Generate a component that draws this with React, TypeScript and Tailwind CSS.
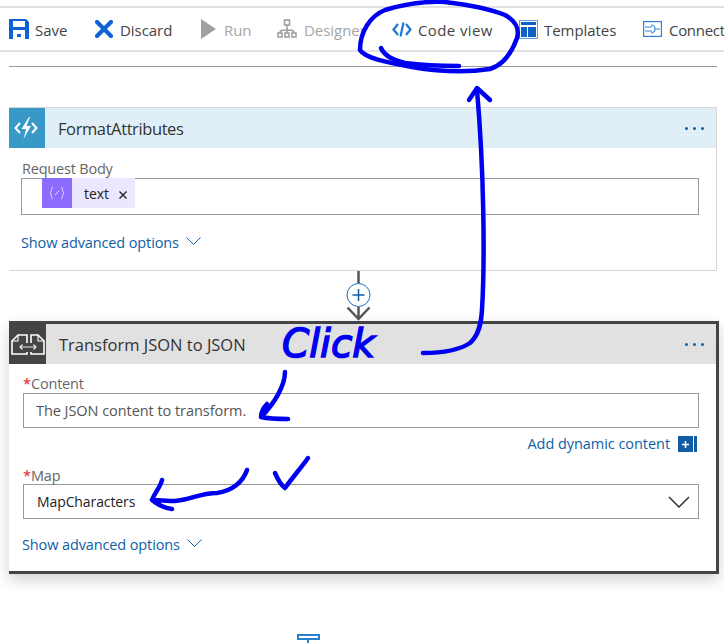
import type { ReactNode } from 'react';

const font = "font-['Open_Sans','Liberation_Sans',sans-serif]";

function ToolItem({ width, icon, label, muted, iconBox, tracking = 'tracking-[-0.05px]' }: { width: string; icon: ReactNode; label: string; muted?: boolean; iconBox: string; tracking?: string }) {
  return (
    <div className={`flex items-center shrink-0 ${width}`}>
      <div className={`flex items-center shrink-0 ${iconBox}`}>{icon}</div>
      <span className={`text-[15px] mt-[2px] whitespace-nowrap ${tracking} ${muted ? 'text-[#a6a6a6]' : 'text-[#444]'}`}>{label}</span>
    </div>
  );
}

function Toolbar() {
  return (
    <div className="mt-[6px] h-[46px] border-y-2 border-[#e2e2e2] flex items-center pl-[9px] overflow-hidden shrink-0">
      <ToolItem
        width="w-[86px]"
        iconBox="w-[26px]"
        label="Save"
        icon={
          <svg width="20" height="20" viewBox="0 0 20 20" fill="#0f62d6">
            <path fillRule="evenodd" d="M0 0h17l3 3v17H0zM4 2v6h12V2zM4 11v9h12v-9z" />
            <rect x="8" y="15" width="4" height="3" />
          </svg>
        }
      />
      <ToolItem
        width="w-[106px]"
        iconBox="w-[25px]"
        label="Discard"
        icon={
          <svg width="18" height="18" viewBox="0 0 18 18">
            <path d="M2 2l14 14M16 2L2 16" stroke="#0f62d6" strokeWidth="4.2" strokeLinecap="round" />
          </svg>
        }
      />
      <ToolItem
        width="w-[76px]"
        iconBox="w-[23px]"
        label="Run"
        muted
        icon={
          <svg width="15" height="20" viewBox="0 0 15 20" fill="#a0a0a0">
            <path d="M0 0l15 10L0 20z" />
          </svg>
        }
      />
      <ToolItem
        width="w-[115px]"
        iconBox="w-[27px]"
        label="Designer"
        muted
        icon={
          <svg width="20" height="20" viewBox="0 0 20 20" fill="none" stroke="#a0a0a0" strokeWidth="1.6">
            <rect x="7.5" y="1" width="5" height="5" />
            <rect x="1" y="14" width="4" height="4" />
            <rect x="8" y="14" width="4" height="4" />
            <rect x="15" y="14" width="4" height="4" />
            <path d="M10 6v8M3 14c0-3 2-3 7-3s7 0 7 3" />
          </svg>
        }
      />
      <ToolItem
        width="w-[127px]"
        iconBox="w-[26px]"
        label="Code view"
        tracking="tracking-[0.4px]"
        icon={
          <svg width="20" height="15" viewBox="0 0 20 15" fill="none" stroke="#1b76d8" strokeWidth="2.2">
            <path d="M6 2L1.500 7.500 6 13M14 2l4.500 5.500L14 13M11.500 0.500L8.500 14.500" />
          </svg>
        }
      />
      <ToolItem
        width="w-[124px]"
        iconBox="w-[25px]"
        label="Templates"
        icon={
          <svg width="19" height="19" viewBox="0 0 19 19">
            <rect x="0.500" y="0.500" width="18" height="18" fill="none" stroke="#5b9fe6" />
            <path d="M2 2h15v3H2zM2 7h6v10H2zM9 7h8v10H9z" fill="#0f62c4" />
          </svg>
        }
      />
      <ToolItem
        width="w-[81px]"
        iconBox="w-[26px]"
        label="Connect"
        tracking="tracking-[-0.3px]"
        icon={
          <svg width="19" height="16" viewBox="0 0 19 16" fill="none" stroke="#2f80dc" strokeWidth="1.2">
            <rect x="0.600" y="0.600" width="17.800" height="14.800" />
            <path d="M2 6h7M2 10h7M8 4a4 4 0 0 1 0 8M12 8h5" />
          </svg>
        }
      />
    </div>
  );
}

function AdvancedLink() {
  return (
    <div className="flex items-center gap-[7px] text-[14.500px] leading-[20px] tracking-[-0.12px] text-[#0f5ea8]">
      <span>Show advanced options</span>
      <svg width="15" height="8" viewBox="0 0 15 8" fill="none" stroke="#0f5ea8" strokeWidth="1" className="mb-[5px]">
        <path d="M0.500 0.500L7.500 7.500L14.500 0.500" />
      </svg>
    </div>
  );
}

function MoreDots() {
  return (
    <div className="flex gap-[5px] ml-auto mt-[1px]">
      <span className="w-[3px] h-[3px] rounded-full bg-[#0f5ea8]" />
      <span className="w-[3px] h-[3px] rounded-full bg-[#0f5ea8]" />
      <span className="w-[3px] h-[3px] rounded-full bg-[#0f5ea8]" />
    </div>
  );
}

function FormatCard() {
  return (
    <div className="mt-[40px] ml-[9px] w-[708px] h-[164px] shrink-0 border-t border-r border-b border-[#d6d6d6]">
      <div className="h-[40px] flex items-center bg-[#e0eff7] pr-[12px]">
        <div className="w-[36px] h-[40px] bg-[#3999c6] flex items-center justify-center">
          <svg width="24" height="24" viewBox="0 0 24 24" fill="none" className="-ml-[3px]">
            <path d="M6 7L1.500 12 6 17M18 7l4.500 5-4.500 5" stroke="#fff" strokeWidth="2" />
            <path d="M15 1L7.500 13H12l-2.500 10L17 10h-4.500L16 1z" fill="#fff" />
          </svg>
        </div>
        <span className="ml-[13px] mt-[2px] text-[16.500px] tracking-[-0.4px] text-[#333]">FormatAttributes</span>
        <MoreDots />
      </div>
      <div className="pl-[12px] pr-[17px]">
        <div className="mt-[11px] text-[14.500px] leading-[19px] tracking-[-0.2px] text-[#666] ml-[1px] h-[19px]">Request Body</div>
        <div className="h-[37px] border border-[#999] pl-[20px] flex items-start">
          <div className="flex h-[30px] -mt-[1px] items-center bg-[#ece7ff]">
            <div className="w-[30px] h-[30px] bg-[#8c6cff] flex items-center justify-center">
              <svg width="16" height="14" viewBox="0 0 16 14" fill="none" stroke="#e6deff" strokeWidth="1">
                <path d="M4 1C2 1 3 6 1 7c2 1 1 6 3 6M12 1c2 0 1 5 3 6-2 1-1 6-3 6M6 9l4-4" />
              </svg>
            </div>
            <span className="ml-[12px] text-[14px] tracking-[-0.1px] text-[#222]">text</span>
            <svg width="8" height="8" viewBox="0 0 8 8" className="ml-[10px] mr-[8px] mt-[3px]" stroke="#222" strokeWidth="1.400">
              <path d="M0.500 0.500l7 7M7.500 0.500l-7 7" />
            </svg>
          </div>
        </div>
        <div className="mt-[18px]">
          <AdvancedLink />
        </div>
      </div>
    </div>
  );
}

function Connector() {
  return (
    <div className="h-[50px] ml-[346px] w-[26px] shrink-0">
      <svg width="26" height="50" viewBox="0 0 26 50" fill="none">
        <path d="M12.500 0v13" stroke="#555" strokeWidth="2.500" />
        <circle cx="12.500" cy="24" r="11.500" fill="#fff" stroke="#1b6fc0" strokeWidth="1" />
        <path d="M12.500 18v12M6.500 24h12" stroke="#0f5ea8" strokeWidth="1.500" />
        <path d="M12.500 36v12" stroke="#555" strokeWidth="2.500" />
        <path d="M1.500 36.500L12.500 48l11-11.500" stroke="#555" strokeWidth="2.500" />
      </svg>
    </div>
  );
}

function RequiredLabel({ text }: { text: string }) {
  return (
    <div className="h-[19px] text-[14.500px] leading-[19px] tracking-[-0.2px] text-[#666] flex">
      <span className="text-[#e81123] w-[8px]">*</span>
      <span>{text}</span>
    </div>
  );
}

function TransformCard() {
  return (
    <div className="ml-[9px] w-[710px] h-[253px] shrink-0 border-t-[3px] border-r-[3px] border-b-[3px] border-[#444] shadow-[0_6px_14px_rgba(0,0,0,0.18)]">
      <div className="h-[40px] flex items-center bg-[#e1e1e1] pr-[12px]">
        <div className="w-[37px] h-[40px] bg-[#444] flex items-center justify-center">
          <svg width="34" height="21" viewBox="0 0 34 21" fill="none" stroke="#fff" strokeWidth="1.600">
            <path d="M16 9V1H7L1 7v13h15v-2M20 9V1h7l6 6v13H20v-2" />
            <path d="M7 1v6H1M27 1v6h6" strokeWidth="1.100" />
            <path d="M9 13h16" stroke="#444" strokeWidth="5" />
            <path d="M9 13h16M11.500 10.500L9 13l2.500 2.500M22.500 10.500L25 13l-2.500 2.500" strokeWidth="1.200" stroke="#e8e8e8" />
          </svg>
        </div>
        <span className="ml-[13px] mt-[2px] text-[16.500px] tracking-[0px] text-[#333]">Transform JSON to JSON</span>
        <MoreDots />
      </div>
      <div className="pl-[14px] pr-[17px]">
        <div className="mt-[10px]">
          <RequiredLabel text="Content" />
        </div>
        <div className="h-[35px] border border-[#999] flex items-center pl-[12px] text-[14.500px] tracking-[-0.05px] text-[#555]">
          The JSON content to transform.
        </div>
        <div className="h-[22px] mt-[5px] flex items-center justify-end gap-[8px] pr-[2px] text-[14.500px] tracking-[-0.05px] text-[#0f5ea8]">
          <span>Add dynamic content</span>
          <div className="flex gap-[1px]">
            <div className="w-[15px] h-[16px] bg-[#0f5ea8] text-white flex items-center justify-center">
              <svg width="7" height="7" viewBox="0 0 7 7" stroke="#fff" strokeWidth="1.500">
                <path d="M3.500 0v7M0 3.500h7" />
              </svg>
            </div>
            <div className="w-[3px] h-[16px] bg-[#0f5ea8]" />
          </div>
        </div>
        <div className="mt-[11px]">
          <RequiredLabel text="Map" />
        </div>
        <div className="h-[35px] border border-[#999] flex items-center pl-[13px] pr-[8px] -mt-[1px] text-[14px] tracking-[-0.1px] text-[#222]">
          <span>MapCharacters</span>
          <svg width="22" height="12" viewBox="0 0 22 12" fill="none" stroke="#333" strokeWidth="1.500" className="ml-auto">
            <path d="M1 1l10 10L21 1" />
          </svg>
        </div>
        <div className="mt-[16px] -ml-[1px]">
          <AdvancedLink />
        </div>
      </div>
    </div>
  );
}

function NextStepStub() {
  return (
    <div className="mt-[60px] ml-[297px] w-[23px] shrink-0">
      <div className="h-[6px] border-2 border-[#2a7fd0]" />
      <div className="w-[2px] h-[4px] ml-[10px] bg-[#2a7fd0]" />
    </div>
  );
}

// marker scribbles sitting on top of the screenshot
function InkOverlay() {
  return (
    <>
      <svg className="absolute inset-0 pointer-events-none" width="724" height="643" viewBox="0 0 724 643" fill="none" stroke="#0000f0" strokeWidth="4.500" strokeLinecap="round" strokeLinejoin="round">
        <path d="M381 48C384 55 392 60 405 63C420 65 440 66 459 66" />
        <path d="M360 50C365 58 385 62 412 67C435 71 465 73 490 69C503 65 512 52 517 38C520 28 514 20 505 15C490 9 470 5 445 2C425 1 405 4 385 10C370 16 360 32 360 50" />
        <path d="M423 353C440 353 458 351 470 343C478 336 481 326 482 310C485 260 484 170 477 90" />
        <path d="M469 100L477 88L490 100" />
        <path d="M285 372C285 385 275 403 261 417C270 419 280 419 288 419M261 417C261 412 263 408 267 404" />
        <path d="M247 470C243 482 232 491 217 493C200 493 190 500 175 501C168 501 158 500 152 500C155 492 160 488 162 480M152 500C158 505 165 508 172 509" />
        <path d="M275 473C278 480 281 485 285 488C292 478 301 468 308 458" />
      </svg>
      <span className="absolute left-[282px] top-[322px] text-[39px] leading-[44px] italic text-[#0000f0] font-['DejaVu_Sans',sans-serif] [-webkit-text-stroke:1.5px_#0000f0]">Click</span>
    </>
  );
}

export default function App() {
  return (
    <div className={`relative w-[724px] h-[643px] overflow-hidden bg-white flex flex-col ${font}`}>
      <Toolbar />
      <div className="mt-[14px] ml-[9px] w-[708px] h-[1px] bg-[#999] shrink-0" />
      <FormatCard />
      <Connector />
      <TransformCard />
      <NextStepStub />
      <InkOverlay />
    </div>
  );
}
